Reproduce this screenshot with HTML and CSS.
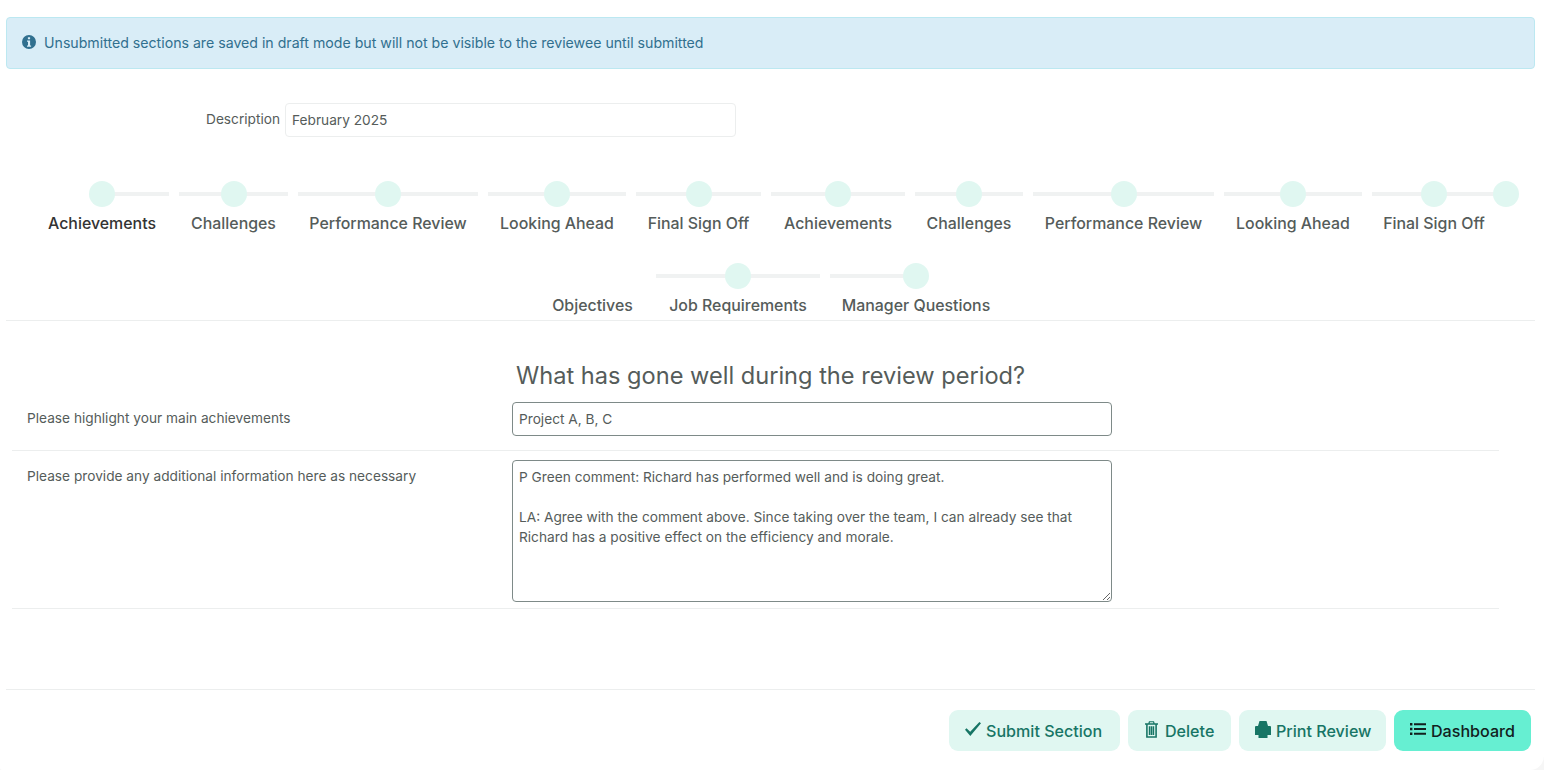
FILE: index.html
```html
<!DOCTYPE html>
<html lang="en">
<head>
<meta charset="utf-8">
<title>Review</title>
<link rel="stylesheet" href="styles.css">
</head>
<body>
<main class="page">
  <div class="alert">
    <svg class="alert-icon" viewBox="0 0 16 16"><path fill-rule="evenodd" d="M8 1a7 7 0 1 0 0 14A7 7 0 0 0 8 1zM6.900 3.200h2.200v2H6.900zM6 6.400h3.100v5h1v1.400H6v-1.400h1V7.800H6z"/></svg>
    <span>Unsubmitted sections are saved in draft mode but will not be visible to the reviewee until submitted</span>
  </div>

  <div class="desc-row">
    <label class="desc-label" for="desc">Description</label>
    <input class="desc-input" id="desc" type="text" value="February 2025">
  </div>

  <div class="steps">
    <ul class="step-row">
      <li class="step step-first active"><i class="dot"></i><span>Achievements</span></li>
      <li class="step"><i class="dot"></i><span>Challenges</span></li>
      <li class="step"><i class="dot"></i><span>Performance Review</span></li>
      <li class="step"><i class="dot"></i><span>Looking Ahead</span></li>
      <li class="step"><i class="dot"></i><span>Final Sign Off</span></li>
      <li class="step"><i class="dot"></i><span>Achievements</span></li>
      <li class="step"><i class="dot"></i><span>Challenges</span></li>
      <li class="step"><i class="dot"></i><span>Performance Review</span></li>
      <li class="step"><i class="dot"></i><span>Looking Ahead</span></li>
      <li class="step step-tail"><i class="dot"></i><span>Final Sign Off</span><i class="dot dot-end"></i></li>
    </ul>
    <ul class="step-row step-row-2">
      <li class="step step-bare"><span>Objectives</span></li>
      <li class="step"><i class="dot"></i><span>Job Requirements</span></li>
      <li class="step step-last"><i class="dot"></i><span>Manager Questions</span></li>
    </ul>
  </div>

  <section class="form">
    <h2 class="question-title">What has gone well during the review period?</h2>
    <div class="q-row q-row-1">
      <label class="q-label" for="q1">Please highlight your main achievements</label>
      <input class="q-input" id="q1" type="text" value="Project A, B, C">
    </div>
    <div class="q-row q-row-2">
      <label class="q-label" for="q2">Please provide any additional information here as necessary</label>
      <textarea class="q-area" id="q2">P Green comment: Richard has performed well and is doing great.

LA: Agree with the comment above. Since taking over the team, I can already see that Richard has a positive effect on the efficiency and morale.</textarea>
    </div>
  </section>

  <footer class="actions">
    <button class="btn btn-submit" type="button">
      <svg class="ico" viewBox="0 0 16 14"><path d="M0 7.800l1.500-1.500 3.700 3.500L14.400 0 16 1.300 5.300 14z"/></svg><span class="btn-text">Submit Section</span></button>
    <button class="btn btn-delete" type="button">
      <svg class="ico ico-tall" viewBox="0 0 14 18"><path fill-rule="evenodd" d="M4.300 0h5.400l.7 2.200H14v1.800h-1.200V18H1.200V4H0V2.200h3.600zM5.300 1.100l-.3 1.100h4l-.3-1.100zM2.900 4v12.400h8.200V4zM4.100 5.500h1.600v9.500H4.100zM6.200 5.500h1.600v9.500H6.200zM8.300 5.500h1.600v9.500H8.300z"/></svg><span class="btn-text">Delete</span></button>
    <button class="btn btn-print" type="button">
      <svg class="ico ico-print" viewBox="0 0 16 17"><path d="M4.500 0h7L13 5h2a1 1 0 0 1 1 1v8h-3.500v3h-9v-3H0V6a1 1 0 0 1 1-1h2z"/></svg><span class="btn-text">Print Review</span></button>
    <button class="btn btn-primary" type="button">
      <svg class="ico ico-list" viewBox="0 0 16 12"><path d="M0 0h2.400v2.400H0zM4 .2h12v2H4zM0 4.800h2.400v2.400H0zM4 5h12v2H4zM0 9.600h2.400V12H0zM4 9.800h12v2H4z"/></svg><span class="btn-text">Dashboard</span></button>
  </footer>
</main>
</body>
</html>
```
FILE: styles.css
```css
* { box-sizing: border-box; }
html, body { margin: 0; padding: 0; }
body {
  background: #f6f6f6;
  font-family: "Inter", "Liberation Sans", sans-serif;
  font-size: 13.7px;
  color: #555c5a;
  height: 770px;
  overflow: hidden;
}
.page {
  height: 770px;
  padding: 17px 9px 0 6px;
  background: #fff;
  border-radius: 0 0 14px 2px;
}

.alert {
  display: flex;
  align-items: center;
  gap: 7px;
  height: 52px;
  padding: 0 14px;
  background: #d9edf7;
  border: 1px solid #bce8f1;
  border-radius: 4px;
  color: #31708f;
  font-size: 14.15px;
  line-height: 20px;
}
.alert span { margin-top: -1px; }
.alert-icon { width: 16px; height: 16px; fill: #31708f; margin-top: -3px; }

.desc-row { display: flex; align-items: center; gap: 4px; margin-top: 34px; padding-left: 200px; }
.desc-label { width: 75px; white-space: nowrap; margin-top: -2px; }
.desc-input {
  width: 451px; height: 34px; padding: 0 6px;
  border: 1px solid #eceeee; border-radius: 4px;
  font: inherit; color: #555c5a; outline: none;
}

.steps { margin-top: 44px; border-bottom: 1px solid #eceeee; }
.step-row {
  display: grid;
  grid-template-columns: 144px 119px 190px 148px 135px 144px 118px 191px 148px 134px;
  list-style: none;
  margin: 0;
  padding: 0 0 0 24px;
}
.step-row-2 {
  grid-template-columns: 117px 174px 182px;
  margin-top: 25px;
  padding-left: 528px;
}
.step {
  position: relative;
  height: 57px;
  padding-top: 31px;
  font-size: 15.9px;
  font-weight: 500;
  line-height: 24px;
  text-align: center;
  white-space: nowrap;
}
.step::before {
  content: "";
  position: absolute;
  top: 11px; left: 5px; right: 5px;
  height: 4px;
  background: #f0f2f2;
}
.step-first::before { left: 50%; }
.step-last::before { right: 50%; }
.step-tail::before { right: -5px; }
.step-bare::before { display: none; }
.active { color: #333; }
.dot {
  position: absolute;
  top: 0; left: 50%;
  width: 26px; height: 26px;
  margin-left: -13px;
  border-radius: 50%;
  background: #e0f7f1;
}
.dot-end { left: auto; right: -18px; margin-left: 0; }

.form { padding: 0 36px 0 6px; }
.question-title {
  margin: 39px 0 0 504px;
  font-size: 23.6px;
  font-weight: 400;
  line-height: 32px;
  white-space: nowrap;
  color: #555c5a;
}
.q-row { display: flex; align-items: flex-start; border-bottom: 1px solid #eceeee; }
.q-row-1 { margin-top: 10px; height: 49px; }
.q-row-2 { padding-top: 9px; height: 158px; }
.q-label { width: 500px; padding: 8px 0 0 15px; }
.q-input, .q-area {
  width: 600px;
  border: 1px solid #7e8a88;
  border-radius: 4px;
  padding: 6px;
  font: inherit;
  line-height: 20px;
  color: #555c5a;
  outline: none;
}
.q-input { height: 34px; }
.q-area { height: 142px; }

.actions {
  display: flex;
  justify-content: flex-end;
  gap: 8px;
  margin-top: 80px;
  padding: 20px 4px 0 0;
  border-top: 1px solid #eceeee;
}
.btn {
  display: inline-flex;
  align-items: center;
  gap: 5px;
  height: 41px;
  padding: 0 16px;
  border: 0;
  border-radius: 9px;
  background: #e0f7f1;
  color: #177565;
  font: 500 16.100px "Inter", "Liberation Sans", sans-serif;
  white-space: nowrap;
}
.btn-text { margin-top: 1px; }
.btn-submit { width: 171px; }
.btn-delete { width: 103px; gap: 7px; padding-left: 17px; }
.btn-print { width: 147px; }
.btn-primary { width: 137px; background: #66efd2; color: #12211e; }
.ico { width: 16px; height: 14px; fill: currentColor; margin-top: -3px; flex: none; }
.ico-tall { width: 13px; height: 17px; margin-top: -3px; }
.ico-print { height: 17px; margin-top: -3px; }
.ico-list { height: 12px; margin-top: -4px; }
```
